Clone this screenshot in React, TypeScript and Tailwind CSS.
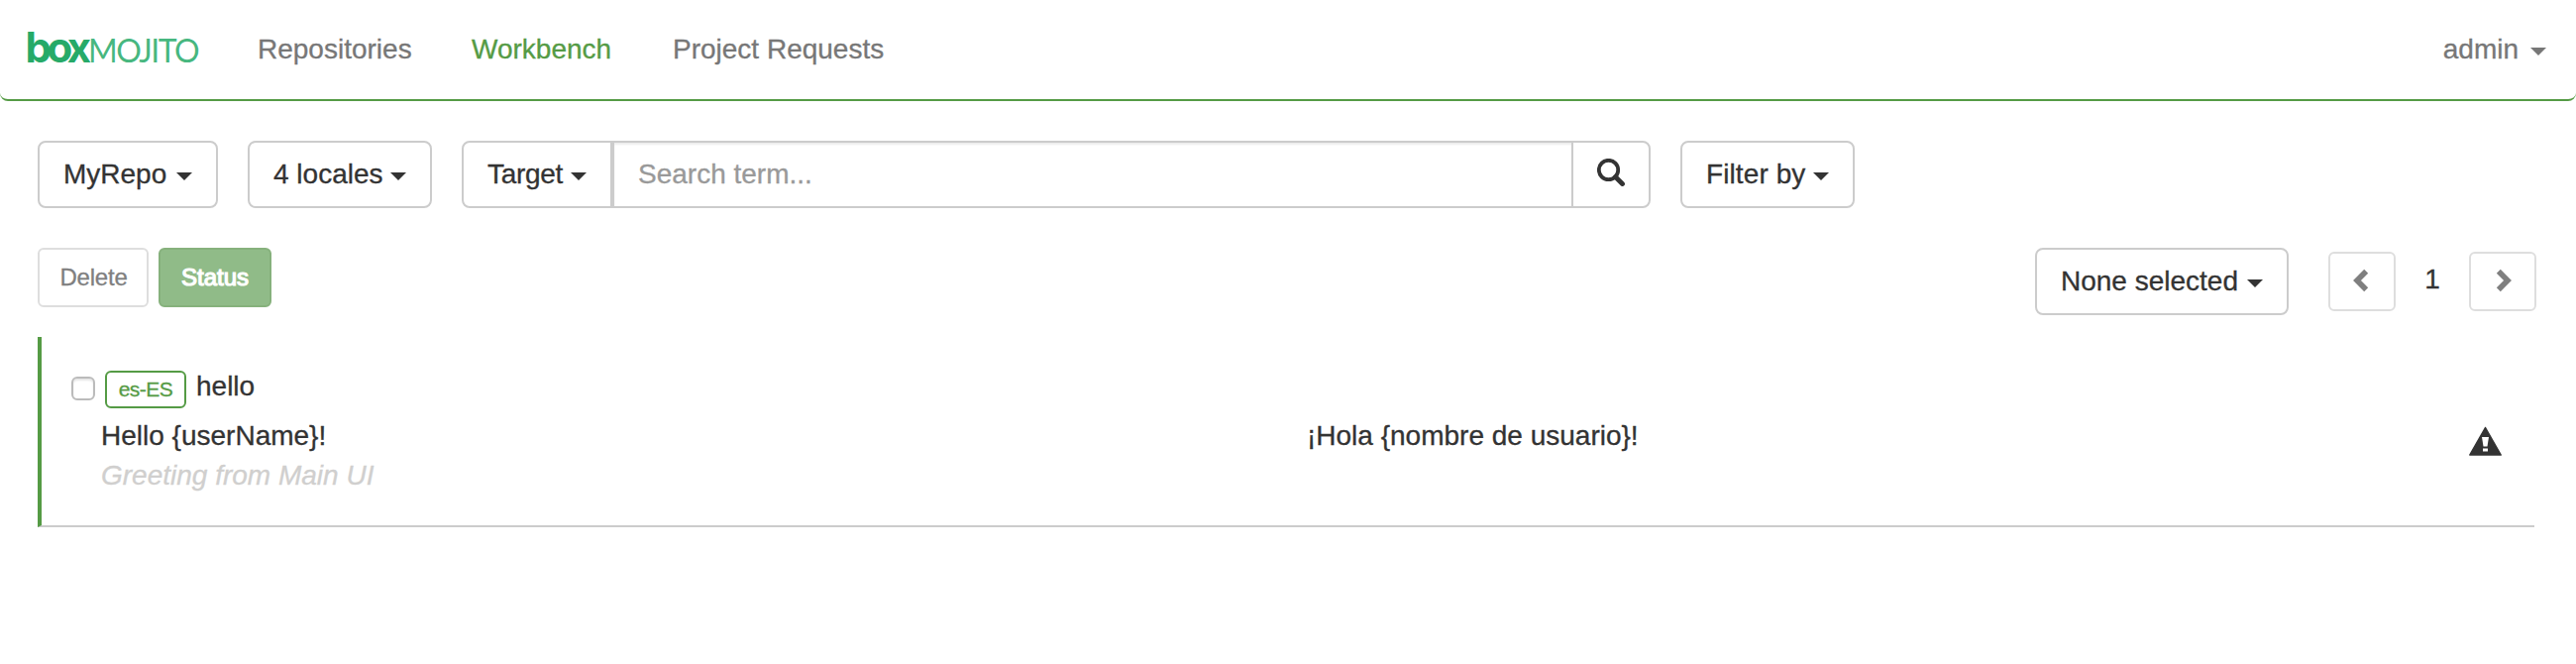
import React from "react";
import type { ReactNode } from "react";

function Caret({ className = "" }: { className?: string }) {
  return (
    <svg width="16" height="8" viewBox="0 0 16 8" className={className} aria-hidden="true">
      <path d="M0 0H16L8 8Z" fill="currentColor" />
    </svg>
  );
}

function Logo() {
  return (
    <svg width="176" height="64" viewBox="0 0 176 64" className="shrink-0" role="img" aria-label="box mojito">
      <text y="45" fill="#26aa68">
        <tspan x="-0.5" fontFamily="Inter, sans-serif" fontSize="42" fontWeight="700" letterSpacing="-4.6">
          box
        </tspan>
        <tspan x="63" fontFamily="Lato, sans-serif" fontSize="32" fontWeight="400" letterSpacing="-1.5" fillOpacity="0.85">
          MOJITO
        </tspan>
      </text>
    </svg>
  );
}

function Dropdown({ children, className }: { children: ReactNode; className: string }) {
  return (
    <button
      className={`flex h-[68px] items-center justify-between border-2 border-[#ccc] bg-white px-6 whitespace-nowrap ${className}`}
    >
      <span>{children}</span>
      <Caret className="mt-1" />
    </button>
  );
}

function PageButton({ direction }: { direction: "prev" | "next" }) {
  return (
    <button className="mt-1 flex h-[60px] w-[68px] items-center justify-center rounded-md border-2 border-[#dedede] text-[#7f7f7f]">
      <svg width="16" height="24" viewBox="0 0 16 24" className={direction === "prev" ? "-mt-0.5 -ml-0.5" : "-mt-0.5 ml-0.5"} aria-hidden="true">
        <path
          d={direction === "prev" ? "M13.2 2.8L4 12L13.2 21.2" : "M2.8 2.8L12 12L2.8 21.2"}
          fill="none"
          stroke="currentColor"
          strokeWidth="5.6"
        />
      </svg>
    </button>
  );
}

export default function App() {
  return (
    <div className="h-[670px] w-[2600px] overflow-hidden bg-white font-['Liberation_Sans',Arial,sans-serif] text-[28px] leading-10 text-[#333] [-webkit-text-stroke:0.3px_currentColor]">
      <header className="flex h-[102px] items-center rounded-lg border-b-2 border-[#559b45] pl-[26px] text-[#777]">
        <Logo />
        <nav className="flex">
          <a className="ml-[58px] w-[156px]">Repositories</a>
          <a className="ml-[60px] w-[144px] text-[#559b45]">Workbench</a>
          <a className="ml-[59px]">Project Requests</a>
        </nav>
        <div className="mr-[30px] ml-auto flex items-center">
          <span>admin</span>
          <Caret className="mt-1 ml-3" />
        </div>
      </header>

      <section className="mt-10 flex pl-[38px]">
        <Dropdown className="w-[182px] rounded-lg">MyRepo</Dropdown>
        <Dropdown className="ml-[30px] w-[186px] rounded-lg">4 locales</Dropdown>
        <Dropdown className="ml-[30px] w-[152px] rounded-l-lg tracking-[-0.3px]">Target</Dropdown>
        <input
          className="h-[68px] w-[968px] border-2 border-r-0 border-[#ccc] px-6 shadow-[inset_0_2px_2px_rgba(0,0,0,0.075)] outline-none placeholder:text-[#999]"
          placeholder="Search term..."
        />
        <button className="flex h-[68px] w-[80px] rounded-r-lg border-2 border-[#ccc] pt-4 pl-6" aria-label="Search">
          <svg width="28" height="28" viewBox="0 0 28 28" aria-hidden="true">
            <circle cx="11.5" cy="11.5" r="9.7" fill="none" stroke="#333" strokeWidth="3.8" />
            <path d="M18.5 18.5L25.5 25.5" stroke="#333" strokeWidth="4.8" strokeLinecap="round" />
          </svg>
        </button>
        <Dropdown className="ml-[30px] w-[176px] rounded-lg tracking-[0.1px]">Filter by</Dropdown>
      </section>

      <section className="mt-10 flex pr-10 pl-[38px]">
        <button className="h-[60px] w-[112px] rounded-md border-2 border-[#dedede] pl-px text-2xl tracking-[-0.2px] text-[#7f7f7f]">Delete</button>
        <button className="ml-2.5 h-[60px] w-[114px] rounded-md border-2 border-[#86b17c] bg-[#90bb88] text-2xl text-white [-webkit-text-stroke:1.2px_white]">
          Status
        </button>
        <div className="ml-auto flex">
          <Dropdown className="w-[256px] rounded-lg">None selected</Dropdown>
          <div className="ml-10 flex">
            <PageButton direction="prev" />
            <span className="mt-3 w-[74px] text-center">1</span>
            <PageButton direction="next" />
          </div>
        </div>
      </section>

      <article className="mt-[22px] mr-[42px] ml-[38px] h-[192px] border-b-2 border-l-4 border-b-[#ccc] border-l-[#559b45] pt-[30px] pl-[30px]">
        <div className="flex h-10 items-center">
          <input
            type="checkbox"
            className="mt-1 h-6 w-6 appearance-none rounded-md border-2 border-[#bbb] bg-white shadow-[inset_0_2px_2px_rgba(0,0,0,0.1)]"
          />
          <span className="mt-1.5 ml-2.5 flex h-[38px] w-[82px] items-center justify-center rounded-md border-2 border-[#559b45] text-[21px] tracking-[-0.5px] text-[#559b45]">
            es-ES
          </span>
          <span className="ml-2.5">hello</span>
        </div>
        <div className="mt-2.5 flex pl-[30px]">
          <div className="w-[1217px]">
            <p>Hello &#123;userName&#125;!</p>
            <p className="text-[#d0cfce] italic">Greeting from Main UI</p>
          </div>
          <p>¡Hola &#123;nombre de usuario&#125;!</p>
          <svg width="34" height="30" viewBox="0 0 34 30" className="mt-[10px] mr-[32px] ml-auto" aria-label="Warning">
            <path d="M16.5 1.5L32.2 29H0.8Z" fill="#333" stroke="#333" strokeWidth="1.5" strokeLinejoin="round" />
            <path d="M13 11H20L18.5 20.5H14.5Z" fill="#fff" />
            <path d="M14 22.5H19V25.5H14Z" fill="#fff" />
          </svg>
        </div>
      </article>
    </div>
  );
}
